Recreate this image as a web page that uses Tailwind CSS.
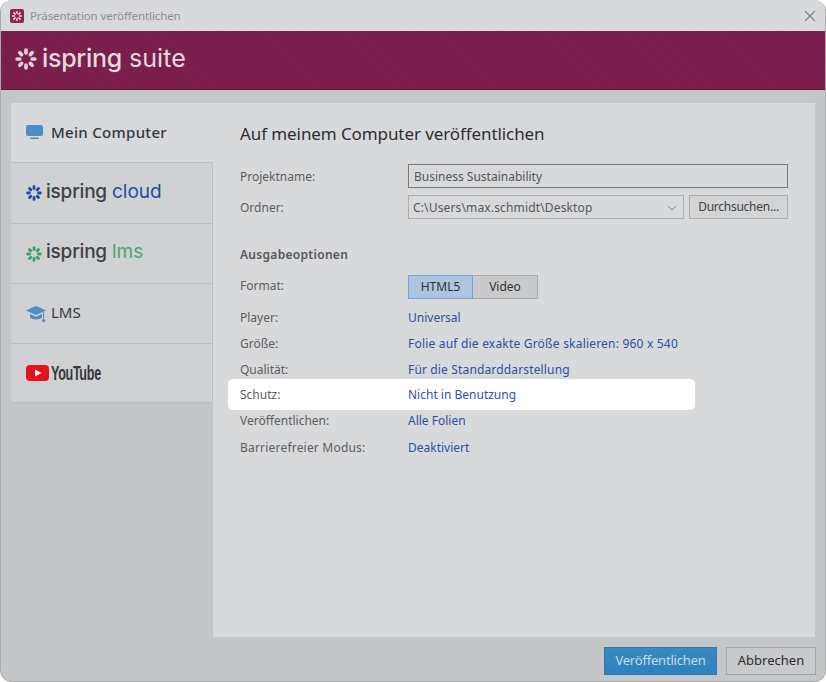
<!DOCTYPE html>
<html lang="de">
<head>
<meta charset="utf-8">
<script src="https://cdn.jsdelivr.net/npm/@tailwindcss/browser@4"></script>
<title>Präsentation veröffentlichen</title>
</head>
<body class="bg-white">
<div class="w-[826px] h-[682px] flex flex-col overflow-hidden rounded-[12px] border-l border-r border-b border-[#a9aaab] bg-[#c5c6c7] font-['Noto_Sans',sans-serif] text-[12px] text-[#5c5d60]">
  <!-- Title bar -->
  <div class="h-[31px] shrink-0 bg-[#d8d9db] flex items-center pl-[9px] pr-[9px]">
    <svg class="w-[14px] h-[14px]" viewBox="0 0 14 14"><rect width="14" height="14" rx="2" fill="#8d2353"/><g stroke="#f0dce5" stroke-width="1.5" stroke-linecap="round"><path d="M7 2.6V4.4M7 9.6V11.4M2.6 7H4.4M9.6 7H11.4M3.9 3.9L5.1 5.1M8.9 8.9L10.1 10.1M10.1 3.9L8.9 5.1M5.1 8.9L3.9 10.1"/></g></svg>
    <span class="ml-[6px] text-[11.5px] tracking-[-0.1px] text-[#8d8e91]">Präsentation veröffentlichen</span>
    <svg class="ml-auto w-[12px] h-[12px]" viewBox="0 0 12 12"><path d="M1 1L11 11M11 1L1 11" stroke="#808184" stroke-width="1.1"/></svg>
  </div>
  <!-- Banner -->
  <div class="h-[59px] shrink-0 bg-[repeating-linear-gradient(45deg,#7c204d_0px,#7c204d_1px,#781d4a_1px,#781d4a_2px)] border-b border-[#5e1638] flex items-center pl-[14px]">
    <svg class="w-[22px] h-[22px] -mt-[2px]" viewBox="0 0 22 22"><g stroke="#e2d3da" stroke-width="3.7" stroke-linecap="round"><path d="M11 2.2V4.8M11 17.2V19.8M2.2 11H4.8M17.2 11H19.8M4.8 4.8L6.6 6.6M15.4 15.4L17.2 17.2M17.2 4.8L15.4 6.6M6.6 15.4L4.8 17.2"/></g></svg>
    <span class="ml-[5px] font-['Inter',sans-serif] text-[25px] leading-none tracking-[-0.3px] font-medium text-[#e3dade] -mt-[4px]">ispring</span>
    <span class="ml-[7px] font-['Inter',sans-serif] text-[25px] leading-none tracking-[0.1px] font-normal text-[#e3dade] -mt-[4px]">suite</span>
  </div>
  <!-- Body -->
  <div class="flex-1 flex flex-col pl-[10px] pr-[10px] pt-[13px] pb-[6px]">
    <div class="h-[534px] flex">
      <!-- Sidebar -->
      <div class="w-[202px] shrink-0 flex flex-col">
        <div class="h-[59px] bg-[#d8d9db] flex items-center pl-[15px]">
          <svg class="w-[17px] h-[15px]" viewBox="0 0 17 15"><rect y="0" width="17" height="11" rx="2" fill="#4f8cc2"/><rect x="4" y="12.5" width="9" height="1.5" rx=".7" fill="#4f8cc2"/></svg>
          <span class="ml-[8px] text-[15px] tracking-[0.3px] font-medium text-[#33373f]">Mein Computer</span>
        </div>
        <div class="h-[61px] bg-[#d0d1d3] border-t border-r border-[#bdbec0] flex items-center pl-[15px]">
          <svg class="w-[16px] h-[16px]" viewBox="0 0 22 22"><g stroke="#1f4ba3" stroke-width="3.9" stroke-linecap="round"><path d="M11 2.2V4.8M11 17.2V19.8M2.2 11H4.8M17.2 11H19.8M4.8 4.8L6.6 6.6M15.4 15.4L17.2 17.2M17.2 4.8L15.4 6.6M6.6 15.4L4.8 17.2"/></g></svg>
          <span class="ml-[4px] -mt-[4px] font-['Inter',sans-serif] text-[19px] leading-none tracking-[-0.2px] font-medium text-[#3d4045]">ispring</span>
          <span class="ml-[5px] -mt-[4px] font-['Inter',sans-serif] text-[19px] leading-none tracking-[0px] text-[#1f4ba3]">cloud</span>
        </div>
        <div class="h-[60px] bg-[#d0d1d3] border-t border-r border-[#bdbec0] flex items-center pl-[15px]">
          <svg class="w-[16px] h-[16px]" viewBox="0 0 22 22"><g stroke="#3f9f6a" stroke-width="3.9" stroke-linecap="round"><path d="M11 2.2V4.8M11 17.2V19.8M2.2 11H4.8M17.2 11H19.8M4.8 4.8L6.6 6.6M15.4 15.4L17.2 17.2M17.2 4.8L15.4 6.6M6.6 15.4L4.8 17.2"/></g></svg>
          <span class="ml-[4px] -mt-[4px] font-['Inter',sans-serif] text-[19px] leading-none tracking-[-0.2px] font-medium text-[#3d4045]">ispring</span>
          <span class="ml-[5px] -mt-[4px] font-['Inter',sans-serif] text-[19px] leading-none tracking-[0px] text-[#4aa873]">lms</span>
        </div>
        <div class="h-[60px] bg-[#d0d1d3] border-t border-r border-[#bdbec0] flex items-center pl-[15px]">
          <svg class="w-[20px] h-[18px]" viewBox="0 0 20 18"><path d="M10 1L20 5.5L10 10L0 5.5Z" fill="#4f8cc2"/><path d="M4 9V12.5C6 15 14 15 16 12.5V9L10 11.8Z" fill="#4f8cc2"/><path d="M17.6 7V14" stroke="#4f8cc2" stroke-width="1"/><circle cx="17.6" cy="15.5" r="1.6" fill="#4f8cc2"/></svg>
          <span class="ml-[5px] -mt-[2px] text-[15px] text-[#33373f]">LMS</span>
        </div>
        <div class="h-[60px] bg-[#d0d1d3] border-t border-r border-b border-[#bdbec0] flex items-center pl-[15px]">
          <svg class="w-[23px] h-[16px]" viewBox="0 0 23 16"><rect width="23" height="16" rx="4" fill="#e3121b"/><path d="M9 4.5L15.5 8L9 11.5Z" fill="#fff"/></svg>
          <span class="ml-[2px] inline-block origin-left scale-x-[0.63] font-['Liberation_Sans',sans-serif] text-[20px] leading-none tracking-[-0.5px] font-bold text-[#35373b]">YouTube</span>
        </div>
      </div>
      <!-- Main panel -->
      <div class="flex-1 bg-[#d8d9db] pl-[27px] pr-[27px] pt-[18px]">
        <h1 class="text-[17px] leading-[26px] font-normal tracking-[-0.09px] text-[#2c2e33]">Auf meinem Computer veröffentlichen</h1>
        <div class="mt-[17px] flex flex-col">
          <div class="h-[24px] flex items-center">
            <span class="w-[168px] shrink-0 pt-[2px]">Projektname:</span>
            <div class="flex-1 h-[24px] border border-[#77787b] flex items-center px-[5px] pt-[2px] text-[#55565a]">Business Sustainability</div>
          </div>
          <div class="h-[24px] mt-[7px] flex items-center">
            <span class="w-[168px] shrink-0 pt-[2px]">Ordner:</span>
            <div class="w-[276px] h-[24px] border border-[#acadaf] flex items-center pl-[4px] pr-[6px] pt-[2px] tracking-[0.15px] text-[#55565a]">C:\Users\max.schmidt\Desktop
              <svg class="ml-auto w-[10px] h-[6px]" viewBox="0 0 10 6"><path d="M1 1L5 5L9 1" fill="none" stroke="#8a8b8e" stroke-width="1"/></svg>
            </div>
            <div class="ml-[5px] flex-1 h-[24px] bg-[#d3d4d6] border border-[#acadaf] flex items-center justify-center tracking-[-0.25px] text-[#3e3f43]">Durchsuchen...</div>
          </div>
        </div>
        <h2 class="mt-[26px] leading-[20px] font-semibold tracking-[0.3px] text-[#55565a]">Ausgabeoptionen</h2>
        <div class="mt-[10px] h-[24px] flex items-center">
          <span class="w-[168px] shrink-0 -mt-[3px]">Format:</span>
          <div class="w-[65px] h-[24px] bg-[#adc6df] border border-[#6ea6dc] flex items-center justify-center text-[#2f3034]">HTML5</div>
          <div class="w-[65px] h-[24px] bg-[#c9cacc] border border-[#a9aaac] border-l-0 flex items-center justify-center text-[#2f3034]">Video</div>
        </div>
        <div class="mt-[6px] flex flex-col">
          <div class="h-[26px] flex items-center"><span class="w-[168px] shrink-0">Player:</span><span class="text-[#2e4fa0]">Universal</span></div>
          <div class="h-[26px] flex items-center"><span class="w-[168px] shrink-0">Größe:</span><span class="tracking-[0.2px] text-[#2e4fa0]">Folie auf die exakte Größe skalieren: 960 x 540</span></div>
          <div class="h-[26px] flex items-center"><span class="w-[168px] shrink-0">Qualität:</span><span class="tracking-[0.15px] text-[#2e4fa0]">Für die Standarddarstellung</span></div>
          <div class="h-[31px] w-[467px] -ml-[12px] -mt-[4px] -mb-[2px] pl-[12px] bg-white rounded-[5px] flex items-center"><span class="w-[168px] shrink-0">Schutz:</span><span class="text-[#2e4fc0]">Nicht in Benutzung</span></div>
          <div class="h-[26px] flex items-center"><span class="w-[168px] shrink-0">Veröffentlichen:</span><span class="text-[#2e4fa0]">Alle Folien</span></div>
          <div class="h-[27px] flex items-center"><span class="w-[168px] shrink-0 tracking-[0.2px]">Barrierefreier Modus:</span><span class="text-[#2e4fa0]">Deaktiviert</span></div>
        </div>
      </div>
    </div>
    <!-- Footer buttons -->
    <div class="mt-[10px] -mr-[1px] h-[28px] flex justify-end gap-[9px] text-[13px]">
      <div class="w-[113px] bg-[linear-gradient(#3a8abf,#2c82c0)] border border-[#2b79b0] flex items-center justify-center tracking-[-0.2px] text-[#c7dbea]">Veröffentlichen</div>
      <div class="w-[90px] bg-[#c9cacc] border border-[#a3a4a6] flex items-center justify-center text-[#2b2c30]">Abbrechen</div>
    </div>
  </div>
</div>
</body>
</html>
